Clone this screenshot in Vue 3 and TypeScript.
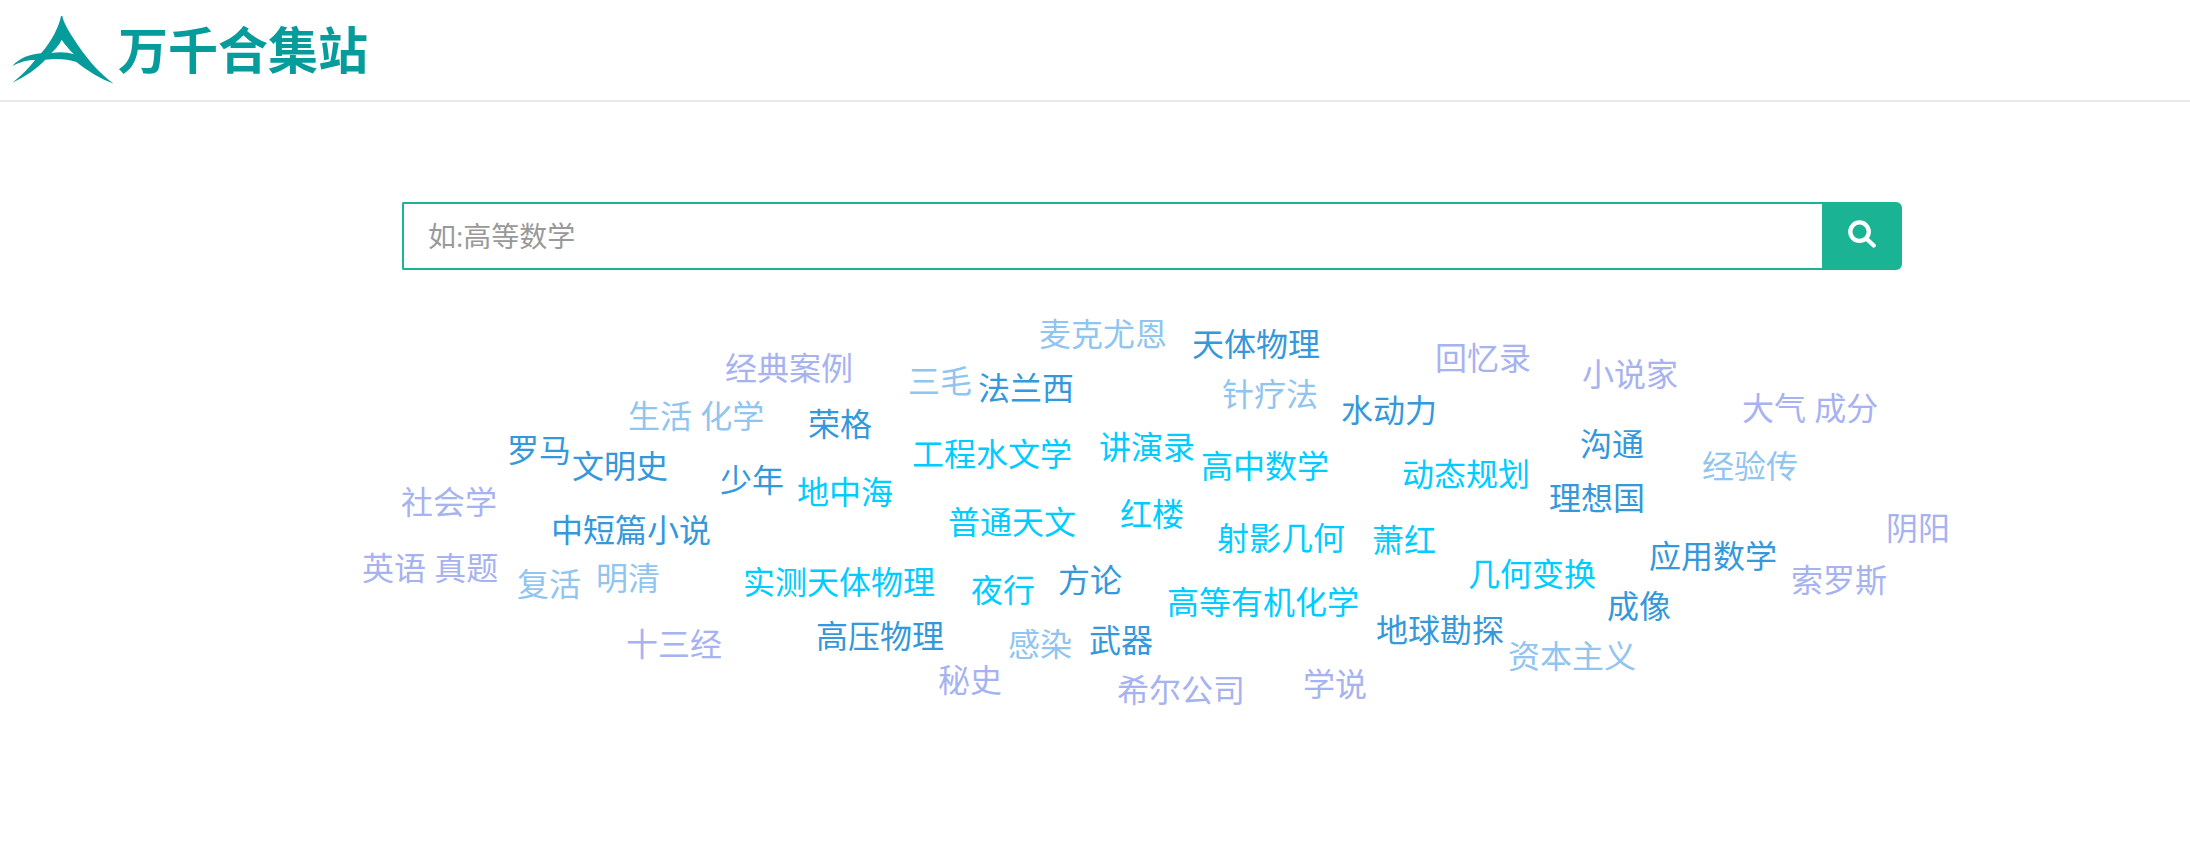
<script setup lang="ts">
import { ref } from 'vue'

type Tone = 'cyan' | 'blue' | 'sky' | 'lilac'

interface Word {
  text: string
  x: number
  y: number
  tone: Tone
}

const keyword = ref('')

const words: Word[] = [
  { text: '麦克尤恩', x: 1039, y: 18, tone: 'sky' },
  { text: '天体物理', x: 1192, y: 28, tone: 'blue' },
  { text: '回忆录', x: 1435, y: 42, tone: 'lilac' },
  { text: '经典案例', x: 725, y: 52, tone: 'lilac' },
  { text: '小说家', x: 1582, y: 58, tone: 'lilac' },
  { text: '三毛', x: 908, y: 65, tone: 'sky' },
  { text: '法兰西', x: 978, y: 72, tone: 'blue' },
  { text: '针疗法', x: 1222, y: 78, tone: 'sky' },
  { text: '大气 成分', x: 1742, y: 92, tone: 'lilac' },
  { text: '水动力', x: 1341, y: 94, tone: 'blue' },
  { text: '生活 化学', x: 628, y: 100, tone: 'sky' },
  { text: '荣格', x: 808, y: 108, tone: 'blue' },
  { text: '沟通', x: 1580, y: 128, tone: 'blue' },
  { text: '讲演录', x: 1099, y: 131, tone: 'cyan' },
  { text: '罗马', x: 507, y: 134, tone: 'blue' },
  { text: '工程水文学', x: 912, y: 138, tone: 'cyan' },
  { text: '文明史', x: 572, y: 150, tone: 'blue' },
  { text: '高中数学', x: 1201, y: 150, tone: 'cyan' },
  { text: '经验传', x: 1702, y: 150, tone: 'sky' },
  { text: '动态规划', x: 1402, y: 158, tone: 'cyan' },
  { text: '少年', x: 720, y: 164, tone: 'blue' },
  { text: '地中海', x: 797, y: 176, tone: 'cyan' },
  { text: '理想国', x: 1549, y: 182, tone: 'blue' },
  { text: '社会学', x: 401, y: 186, tone: 'lilac' },
  { text: '红楼', x: 1120, y: 198, tone: 'cyan' },
  { text: '普通天文', x: 948, y: 206, tone: 'cyan' },
  { text: '阴阳', x: 1886, y: 212, tone: 'lilac' },
  { text: '中短篇小说', x: 551, y: 214, tone: 'blue' },
  { text: '射影几何', x: 1217, y: 222, tone: 'cyan' },
  { text: '萧红', x: 1372, y: 224, tone: 'cyan' },
  { text: '应用数学', x: 1649, y: 240, tone: 'blue' },
  { text: '英语 真题', x: 362, y: 252, tone: 'lilac' },
  { text: '几何变换', x: 1468, y: 258, tone: 'cyan' },
  { text: '明清', x: 596, y: 262, tone: 'sky' },
  { text: '方论', x: 1058, y: 264, tone: 'blue' },
  { text: '索罗斯', x: 1791, y: 264, tone: 'lilac' },
  { text: '实测天体物理', x: 743, y: 266, tone: 'cyan' },
  { text: '复活', x: 517, y: 268, tone: 'sky' },
  { text: '夜行', x: 971, y: 274, tone: 'cyan' },
  { text: '高等有机化学', x: 1167, y: 286, tone: 'cyan' },
  { text: '成像', x: 1607, y: 290, tone: 'blue' },
  { text: '地球勘探', x: 1376, y: 314, tone: 'blue' },
  { text: '高压物理', x: 816, y: 320, tone: 'blue' },
  { text: '武器', x: 1089, y: 324, tone: 'blue' },
  { text: '十三经', x: 626, y: 328, tone: 'lilac' },
  { text: '感染', x: 1008, y: 328, tone: 'sky' },
  { text: '资本主义', x: 1508, y: 340, tone: 'sky' },
  { text: '秘史', x: 938, y: 364, tone: 'lilac' },
  { text: '学说', x: 1303, y: 368, tone: 'lilac' },
  { text: '希尔公司', x: 1117, y: 374, tone: 'lilac' },
]
</script>

<template>
  <div class="page">
    <header class="header">
      <a class="brand" href="#">
        <svg class="mark" viewBox="36 48 304 204" aria-hidden="true">
          <path
            fill-rule="evenodd"
            d="M182 48C178 76 152 128 122 160C90 162 58 174 36 198C60 185 84 180 104 180C85 206 60 229 36 248C76 229 110 206 135 179C172 175 204 178 228 186C264 214 302 238 340 251C294 218 250 164 220 116C203 90 190 68 186 48ZM184 119C177 134 166 147 153 159C178 155 204 157 221 163C207 149 195 135 184 119Z"
          />
        </svg>
        <span class="name">万千合集站</span>
      </a>
    </header>

    <main>
      <form class="search" role="search" @submit.prevent>
        <input v-model="keyword" class="field" type="text" placeholder="如:高等数学" aria-label="搜索" />
        <button class="submit" type="submit" aria-label="搜索">
          <svg class="glass" viewBox="0 0 85 84" aria-hidden="true">
            <circle cx="35" cy="35" r="28" />
            <path d="M57 57L78 77" />
          </svg>
        </button>
      </form>

      <nav class="cloud" aria-label="热门标签">
        <a
          v-for="word in words"
          :key="word.text"
          href="#"
          class="word"
          :class="word.tone"
          :style="{ left: word.x + 'px', top: word.y + 'px' }"
        >{{ word.text }}</a>
      </nav>
    </main>
  </div>
</template>

<style>
body {
  margin: 0;
  background: #fff;
}
</style>

<style scoped>
.page {
  font-family: 'Open Sans', 'Noto Sans CJK SC', sans-serif;
  overflow-x: hidden;
}

.header {
  display: flex;
  align-items: center;
  box-sizing: border-box;
  height: 102px;
  padding: 0 12px;
  border-bottom: 2px solid #e7eaec;
}

.brand {
  display: flex;
  align-items: center;
  gap: 4px;
  color: #079c9c;
  text-decoration: none;
}

.mark {
  width: 102px;
  height: 68px;
  fill: currentColor;
}

.name {
  font-size: 50px;
  font-weight: 700;
  line-height: 68px;
}

.search {
  display: flex;
  height: 68px;
  margin: 100px 288px 0 402px;
}

.field {
  flex: 1;
  min-width: 0;
  box-sizing: border-box;
  padding: 0 24px;
  border: 2px solid #1ab394;
  border-right: 0;
  border-radius: 2px 0 0 2px;
  outline: 0;
  background: #fff;
  color: #555;
  font-family: inherit;
  font-size: 28px;
}

.field::placeholder {
  color: #999;
  opacity: 1;
}

.submit {
  display: flex;
  align-items: center;
  justify-content: center;
  width: 80px;
  padding: 0 0 4px;
  border: 0;
  border-radius: 0 6px 6px 0;
  background: #1ab394;
  cursor: pointer;
}

.glass {
  width: 28px;
  height: 28px;
  fill: none;
  stroke: #fff;
  stroke-width: 13;
  stroke-linecap: round;
}

.cloud {
  position: relative;
  height: 480px;
  margin-top: 30px;
}

.word {
  position: absolute;
  font-size: 32px;
  line-height: 32px;
  text-decoration: none;
  white-space: nowrap;
}

.cyan {
  color: #00ccff;
}

.blue {
  color: #3498db;
}

.sky {
  color: #90c5f0;
}

.lilac {
  color: #a7b2f0;
}
</style>
